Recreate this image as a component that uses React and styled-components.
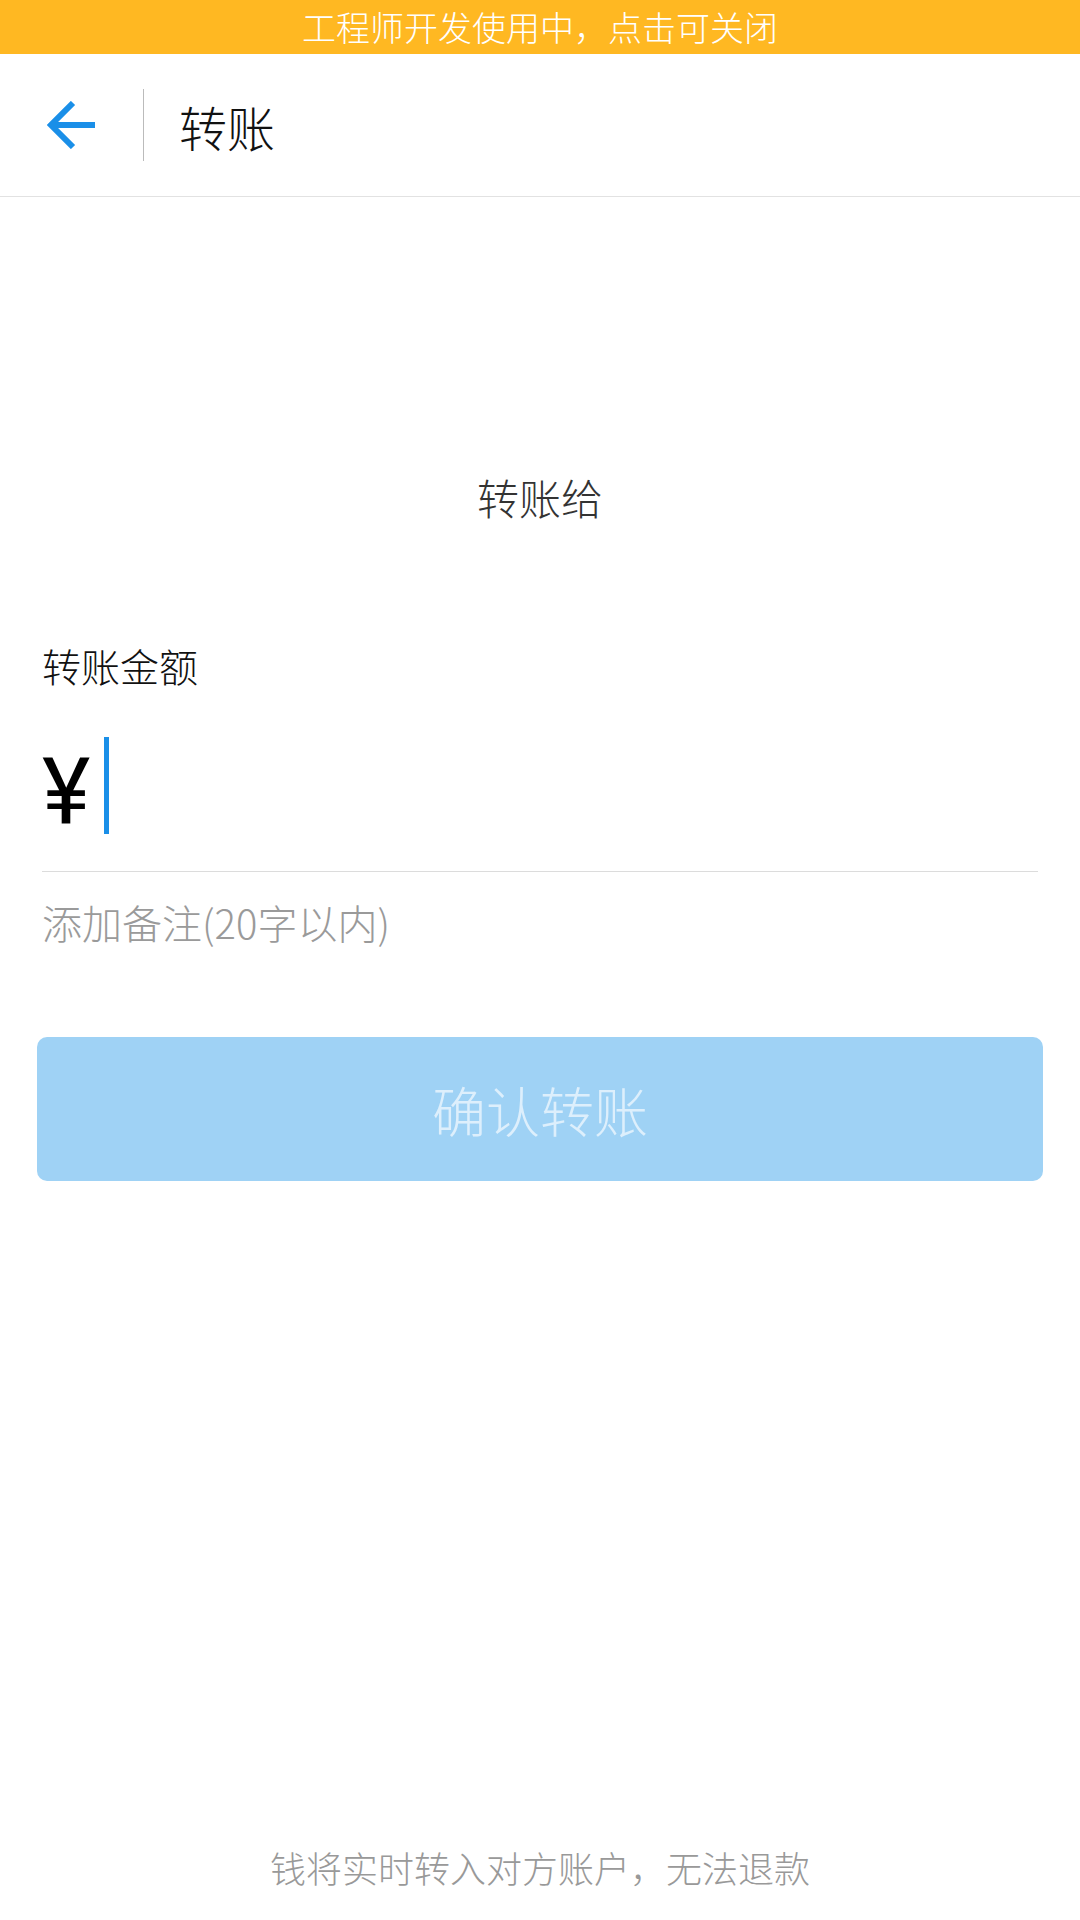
import styled, { createGlobalStyle } from "styled-components";

const GlobalStyle = createGlobalStyle`
  body {
    margin: 0;
    background: #fff;
    font-family: "Noto Sans CJK SC", "Noto Sans", sans-serif;
    font-weight: 300;
  }
`;

const Page = styled.div`
  width: 1080px;
  height: 1920px;
  display: flex;
  flex-direction: column;
  background: #fff;
`;

const DevBanner = styled.div`
  height: 54px;
  background: #ffb822;
  color: #fff;
  font-size: 34px;
  line-height: 54px;
  text-align: center;
`;

const Header = styled.div`
  height: 142px;
  border-bottom: 1px solid #e2e2e2;
  display: flex;
  align-items: center;
`;

const BackButton = styled.div`
  width: 96px;
  padding-left: 47px;
  display: flex;
  align-items: center;
  box-sizing: border-box;
  height: 48px;
`;

const Divider = styled.div`
  width: 1px;
  height: 72px;
  background: #bbb;
  margin-left: 47px;
`;

const Title = styled.div`
  font-size: 48px;
  color: #111;
  margin-left: 35px;
  margin-top: 2px;
`;

const Recipient = styled.div`
  margin-top: 270px;
  font-size: 42px;
  line-height: 60px;
  color: #333;
  text-align: center;
`;

const Form = styled.div`
  padding: 0 42px;
  margin-top: 110px;
`;

const Label = styled.div`
  font-size: 39px;
  line-height: 56px;
  color: #111;
`;

const AmountRow = styled.div`
  margin-top: 44px;
  height: 97px;
  display: flex;
  align-items: center;
  border-bottom: 1px solid #dcdcdc;
  padding-bottom: 37px;
`;

const Yen = styled.span`
  font-family: Roboto, "Liberation Sans", sans-serif;
  font-weight: 400;
  font-size: 92px;
  line-height: 1;
  color: #000;
  padding-top: 14px;
  margin-right: 14px;
`;

const Caret = styled.div`
  width: 5px;
  height: 97px;
  background: #1a8fe8;
`;

const Note = styled.div`
  margin-top: 22px;
  font-size: 40px;
  line-height: 56px;
  color: #9a9a9a;
`;

const ConfirmButton = styled.div`
  margin: 87px 37px 0;
  height: 144px;
  border-radius: 10px;
  background: #9fd2f5;
  color: #ddeffc;
  font-size: 54px;
  display: flex;
  align-items: center;
  justify-content: center;
`;

const Footer = styled.div`
  margin-top: auto;
  padding-bottom: 28px;
  font-size: 36px;
  line-height: 50px;
  color: #999;
  text-align: center;
`;

function BackArrow() {
  return (
    <svg width="48" height="48" viewBox="0 0 48 48">
      <path
        d="M26 2 L4 24 L26 46 M4 24 H48"
        fill="none"
        stroke="#1a8fe8"
        strokeWidth="6"
      />
    </svg>
  );
}

export default function App() {
  return (
    <Page>
      <GlobalStyle />
      <DevBanner>工程师开发使用中，点击可关闭</DevBanner>
      <Header>
        <BackButton>
          <BackArrow />
        </BackButton>
        <Divider />
        <Title>转账</Title>
      </Header>
      <Recipient>转账给</Recipient>
      <Form>
        <Label>转账金额</Label>
        <AmountRow>
          <Yen>¥</Yen>
          <Caret />
        </AmountRow>
        <Note>添加备注(20字以内)</Note>
      </Form>
      <ConfirmButton>确认转账</ConfirmButton>
      <Footer>钱将实时转入对方账户，无法退款</Footer>
    </Page>
  );
}
